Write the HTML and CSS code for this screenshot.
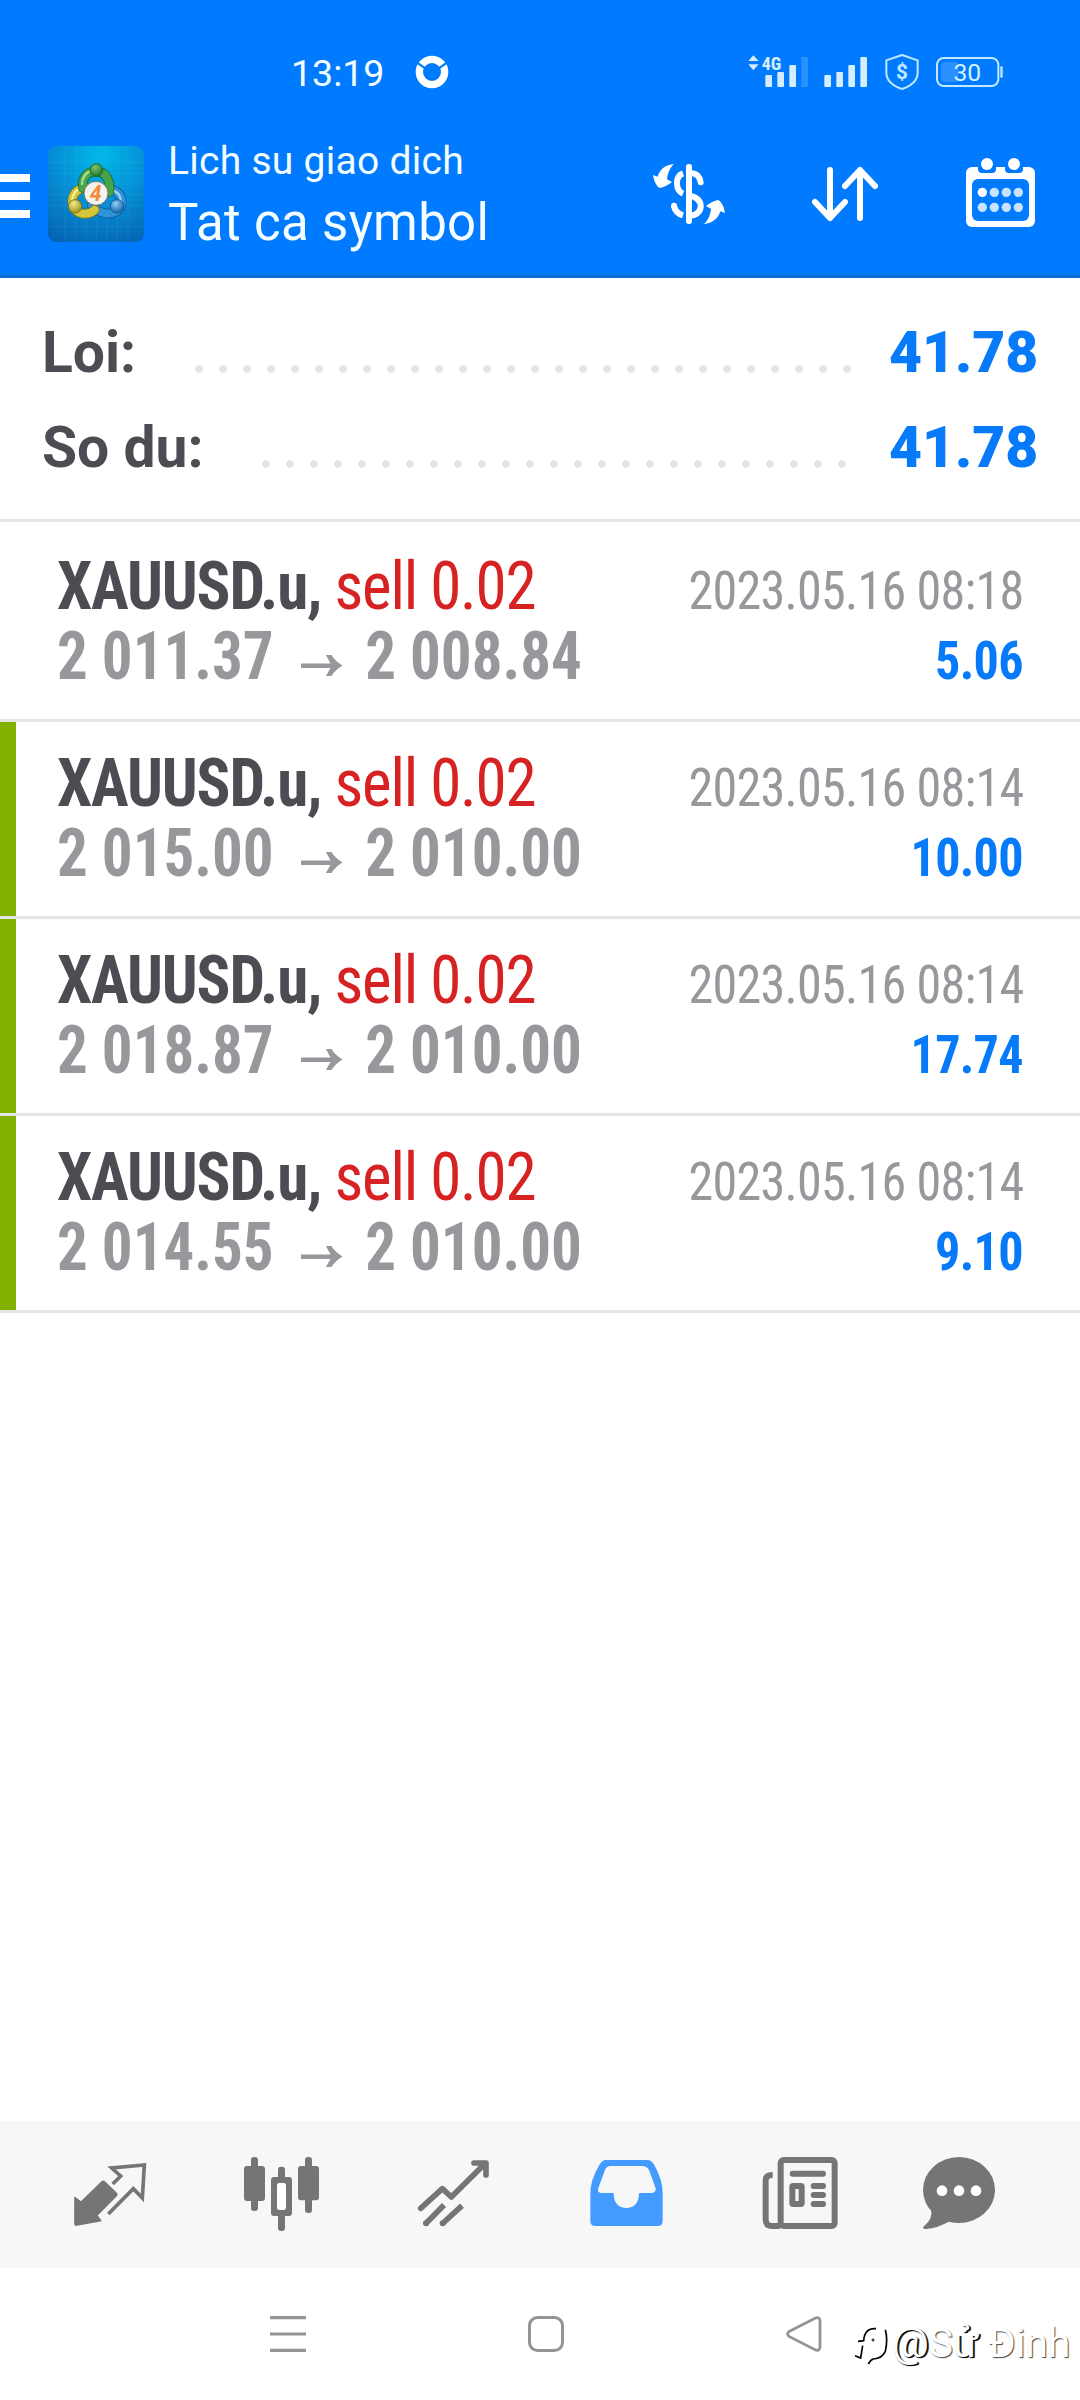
FILE: index.html
```html
<!DOCTYPE html>
<html lang="vi">
<head>
<meta charset="utf-8">
<title>Lich su giao dich</title>
<link rel="stylesheet" href="styles.css">
</head>
<body>
<div class="screen">
  <header class="header">
    <div class="status">
      <span class="clock">13:19</span>
      <svg class="ring" width="34" height="40" viewBox="435 30 102 120"><circle cx="486" cy="96" r="38" fill="none" stroke="#fff" stroke-width="22"/><path d="M436 64L470 88M536 64L502 88" stroke="#007aff" stroke-width="7"/></svg>
      <div class="status-right">
        <svg width="61" height="40" viewBox="57 30 183 120" fill="#d4eeff"><path d="M58 63L73 46L89 63ZM58 73H89L73 91Z"/><text x="98" y="90" class="net">4G</text><rect x="109" y="105" width="20" height="36" rx="3"/><rect x="145" y="96" width="20" height="45" rx="3"/><rect x="181" y="75" width="20" height="66" rx="3"/><rect x="217" y="51" width="20" height="90" rx="3" opacity=".2"/></svg>
        <svg width="44" height="40" viewBox="279 30 132 120" fill="#d4eeff"><rect x="280" y="105" width="20" height="36" rx="3"/><rect x="316" y="96" width="20" height="45" rx="3"/><rect x="352" y="75" width="20" height="66" rx="3"/><rect x="388" y="51" width="20" height="90" rx="3"/></svg>
        <svg width="36" height="40" viewBox="459 30 108 120"><path d="M513 45L560 61V98Q560 130 513 147Q466 130 466 98V61Z" fill="none" stroke="#bfe9ff" stroke-width="6" stroke-linejoin="round"/><text x="513" y="118" class="coin">$</text></svg>
        <svg width="69" height="40" viewBox="615 30 207 120"><rect x="633" y="66" width="52" height="60" rx="10" fill="#fff" opacity=".17"/><rect x="621" y="54" width="184" height="84" rx="20" fill="none" stroke="#bfe9ff" stroke-width="6"/><rect x="811" y="79" width="7" height="34" rx="3" fill="#bfe9ff"/><text x="712" y="123" class="charge">30</text></svg>
      </div>
    </div>
    <div class="appbar">
      <div class="menu"><i></i><i></i><i></i></div>
      <svg class="logo" width="96" height="96" viewBox="144 48 288 288">
        <defs>
          <radialGradient id="sky" cx=".55" cy=".1" r="1"><stop offset="0" stop-color="#00b8ea"/><stop offset=".45" stop-color="#0592d6"/><stop offset="1" stop-color="#0563b3"/></radialGradient>
          <radialGradient id="gr" cx=".4" cy=".3" r=".7"><stop offset="0" stop-color="#7cc96e"/><stop offset="1" stop-color="#22762c"/></radialGradient>
          <radialGradient id="ye" cx=".4" cy=".3" r=".7"><stop offset="0" stop-color="#f2ea90"/><stop offset="1" stop-color="#a09418"/></radialGradient>
          <radialGradient id="bl" cx=".4" cy=".3" r=".7"><stop offset="0" stop-color="#8fd0f4"/><stop offset="1" stop-color="#1767ae"/></radialGradient>
        </defs>
        <rect x="144" y="48" width="288" height="288" rx="26" fill="url(#sky)"/>
        <path d="M195 48V336M228 48V336M259 48V336M290 48V336M321 48V336M352 48V336M384 48V336M144 98H432M144 130H432M144 162H432M144 194H432M144 226H432M144 258H432M144 290H432" stroke="#6cd0ff" stroke-width="2" opacity=".17"/>
        <g fill="none" stroke-linecap="round">
          <path d="M324 178C366 182 373 215 357 238C333 260 297 252 276 226" stroke="#135a9b" stroke-width="29"/>
          <path d="M324 178C366 182 373 215 357 238C333 260 297 252 276 226" stroke="#2f93d8" stroke-width="24"/>
          <path d="M333 180C362 186 369 212 354 232" stroke="#9ad4f4" stroke-width="7"/>
          <path d="M256 173C219 177 209 212 222 236C242 257 268 255 284 240" stroke="#7d7413" stroke-width="29"/>
          <path d="M256 173C219 177 209 212 222 236C242 257 268 255 284 240" stroke="#d3c638" stroke-width="24"/>
          <path d="M248 172C220 180 213 205 218 226" stroke="#f4ee9c" stroke-width="7"/>
          <path d="M249 174C245 134 269 124 289 124C315 124 333 150 328 186" stroke="#1d6828" stroke-width="29"/>
          <path d="M249 174C245 134 269 124 289 124C315 124 333 150 328 186" stroke="#46a548" stroke-width="24"/>
          <path d="M246 162C248 134 262 126 275 122" stroke="#a6dd96" stroke-width="7"/>
        </g>
        <circle cx="289" cy="120" r="19" fill="url(#gr)" stroke="#1d6828" stroke-width="3"/>
        <circle cx="225" cy="229" r="20" fill="url(#ye)" stroke="#7d7413" stroke-width="3"/>
        <circle cx="351" cy="229" r="20" fill="url(#bl)" stroke="#135a9b" stroke-width="3"/>
        <circle cx="288" cy="190" r="36" fill="#f2f2f0" stroke="#776f50" stroke-width="3"/>
        <text x="287" y="212" class="four">4</text>
      </svg>
      <div class="titles">
        <div class="subtitle">Lich su giao dich</div>
        <div class="title">Tat ca symbol</div>
      </div>
      <div class="actions">
        <svg width="76" height="90" viewBox="36 30 228 270" fill="#fff">
          <rect x="141" y="72" width="18" height="180" rx="8"/>
          <g fill="none" stroke="#fff" stroke-width="18"><path d="M132 100C108 108 108 150 132 161"/><path d="M155 99C172 100 183 110 185 127" stroke-linecap="round"/><path d="M152 168C196 172 196 224 154 227"/><path d="M132 226C118 222 108 212 105 198"/></g><circle cx="105" cy="197" r="9"/>
          <path id="turn" d="M105 72C80 74 62 88 56 110L42 105L46 122Q54 140 62 144Q80 141 99 126L84 118C86 100 92 84 105 72Z"/>
          <use href="#turn" transform="rotate(180 150 162)"/>
        </svg>
        <svg width="72" height="90" viewBox="510 30 216 270" fill="none" stroke="#fff" stroke-width="18" stroke-linecap="round" stroke-linejoin="round"><path d="M573 90V234M528 186L573 234L618 186M663 234V90M618 138L663 90L708 138"/></svg>
        <svg width="75" height="90" viewBox="969 30 225 270" fill="#fff">
          <rect x="978" y="81" width="207" height="180" rx="18"/>
          <g fill="#007aff"><rect x="996" y="117" width="171" height="126" rx="18"/><rect x="1014" y="72" width="54" height="27" rx="12"/><rect x="1095" y="72" width="54" height="27" rx="12"/></g>
          <circle cx="1041" cy="72" r="18"/><circle cx="1122" cy="72" r="18"/><circle cx="1027" cy="157" r="14"/>
          <g fill="#c8e2ff"><circle cx="1063" cy="157" r="14"/><circle cx="1099" cy="157" r="14"/><circle cx="1135" cy="157" r="14"/><circle cx="1027" cy="202" r="14"/><circle cx="1063" cy="202" r="14"/><circle cx="1099" cy="202" r="14"/><circle cx="1135" cy="202" r="14"/></g>
        </svg>
      </div>
    </div>
  </header>

  <section class="summary">
    <div class="sum"><span>Loi:</span><i class="dots wide"></i><b>41.78</b></div>
    <div class="sum"><span>So du:</span><i class="dots narrow"></i><b>41.78</b></div>
  </section>

  <main class="deals">
    <article class="deal first">
      <div class="line"><div class="left head"><b class="symbol">XAUUSD.u,</b> <span class="sell">sell 0.02</span></div><time>2023.05.16 08:18</time></div>
      <div class="line"><div class="left price">2 011.37<svg class="arrow" width="45" height="21" viewBox="0 0 45 21"><path d="M0 8.500H32L27 0H33Q37 6 45 10.500Q37 15 33 21H27L32 13H0Z"/></svg>2 008.84</div><b class="profit">5.06</b></div>
    </article>
    <article class="deal tp">
      <div class="line"><div class="left head"><b class="symbol">XAUUSD.u,</b> <span class="sell">sell 0.02</span></div><time>2023.05.16 08:14</time></div>
      <div class="line"><div class="left price">2 015.00<svg class="arrow" width="45" height="21" viewBox="0 0 45 21"><path d="M0 8.500H32L27 0H33Q37 6 45 10.500Q37 15 33 21H27L32 13H0Z"/></svg>2 010.00</div><b class="profit">10.00</b></div>
    </article>
    <article class="deal tp">
      <div class="line"><div class="left head"><b class="symbol">XAUUSD.u,</b> <span class="sell">sell 0.02</span></div><time>2023.05.16 08:14</time></div>
      <div class="line"><div class="left price">2 018.87<svg class="arrow" width="45" height="21" viewBox="0 0 45 21"><path d="M0 8.500H32L27 0H33Q37 6 45 10.500Q37 15 33 21H27L32 13H0Z"/></svg>2 010.00</div><b class="profit">17.74</b></div>
    </article>
    <article class="deal tp">
      <div class="line"><div class="left head"><b class="symbol">XAUUSD.u,</b> <span class="sell">sell 0.02</span></div><time>2023.05.16 08:14</time></div>
      <div class="line"><div class="left price">2 014.55<svg class="arrow" width="45" height="21" viewBox="0 0 45 21"><path d="M0 8.500H32L27 0H33Q37 6 45 10.500Q37 15 33 21H27L32 13H0Z"/></svg>2 010.00</div><b class="profit">9.10</b></div>
    </article>
  </main>

  <nav class="tabs">
    <svg width="74" height="80" viewBox="69 129 222 240"><path d="M75 263L93 277L157 215Q161 213 165 217L198 249Q202 254 198 258L140 316L152 332L80 345Q75 346 75 341Z" fill="#757575" stroke="#757575" stroke-width="5" stroke-linejoin="round"/><path d="M188 222L212 198L185 174L283 165L277 264L250 236L175 312" fill="none" stroke="#757575" stroke-width="11"/></svg>
    <svg width="77" height="80" viewBox="579 129 231 240" fill="#757575"><rect x="582" y="168" width="63" height="105" rx="9"/><rect x="603" y="141" width="21" height="162" rx="9"/><rect x="684" y="170" width="21" height="193" rx="9"/><rect x="663" y="201" width="63" height="117" rx="9"/><rect x="681" y="219" width="27" height="81" rx="7" fill="#fff"/><rect x="744" y="168" width="63" height="103" rx="9"/><rect x="765" y="141" width="21" height="168" rx="9"/></svg>
    <svg width="73" height="80" viewBox="1101 129 219 240" fill="none" stroke="#757575" stroke-width="17" stroke-linecap="round" stroke-linejoin="round"><path d="M1112 295L1177 236L1204 261L1306 160M1272 159H1308V195"/><g stroke-linecap="butt"><path d="M1126 342L1182 285M1176 342L1236 287"/></g><g fill="#757575" stroke="none"><circle cx="1128" cy="340" r="9"/><circle cx="1178" cy="340" r="9"/></g></svg>
    <svg width="73" height="80" viewBox="90 129 219 240"><path d="M135 150H265Q275 151 283 165Q308 210 308 250V333Q308 348 293 348H106Q91 348 91 333V250Q91 210 118 165Q126 151 135 150Z" fill="#449bff"/><path d="M150 168H248Q262 170 267 180L287 235Q288 248 276 249H237C237 280 222 294 199 294S161 280 161 249H124Q112 248 114 237L134 182Q139 169 150 168Z" fill="#f7f7f7"/></svg>
    <svg width="76" height="80" viewBox="606 129 228 240" fill="none" stroke="#757575" stroke-width="18" stroke-linecap="round"><rect x="662" y="150" width="162" height="198" rx="9"/><path d="M638 195Q617 195 617 211V328Q617 348 635 348H660" stroke-linecap="butt"/><path d="M698 191H789M761 228H789M761 255H789M761 282H789"/><rect x="697" y="228" width="28" height="54" rx="2"/></svg>
    <svg width="74" height="80" viewBox="1083 129 222 240" fill="#757575"><ellipse cx="1194" cy="240" rx="108" ry="99"/><path d="M1108 292Q1120 325 1087 350Q1085 357 1095 357Q1130 355 1166 334Z"/><g fill="#fff"><circle cx="1143" cy="242" r="16"/><circle cx="1194" cy="242" r="16"/><circle cx="1245" cy="242" r="16"/></g></svg>
  </nav>

  <footer class="system">
    <svg width="36" height="36" viewBox="0 0 36 36"><path d="M0 1.6H36M0 18H36M0 34.4H36" stroke="#949494" stroke-width="3.2"/></svg>
    <svg width="36" height="36" viewBox="0 0 36 36"><rect x="1.5" y="1.5" width="33" height="33" rx="8" fill="none" stroke="#949494" stroke-width="3"/></svg>
    <svg width="36" height="36" viewBox="0 0 36 36"><path d="M3 15.6L29.5 2Q34 .8 34 5.2V30.8Q34 35.200 29.500 34L3 20.400Q.2 18 3 15.600Z" fill="none" stroke="#949494" stroke-width="2.8"/></svg>
    <div class="mark">
      <svg width="36" height="42" viewBox="36 220 108 126" fill="none" stroke="#000" stroke-width="5"><path d="M108 237Q74 234 71 273L54 275M68 288L62 325L45 318"/><path d="M136 240Q144 270 136 305Q126 326 100 328Q92 330 85 343"/><circle cx="99" cy="271" r="3" stroke-width="3"/></svg>
      <div class="author"><span class="at">@</span><span class="soft">S</span><span class="at">ử</span> <span class="soft">Đinh</span></div>
    </div>
  </footer>
</div>
</body>
</html>
```
FILE: styles.css
```css
* { box-sizing: border-box; }
body { margin: 0; background: #fff; font-family: Roboto, "Liberation Sans", sans-serif; }
svg { display: block; flex: none; }
.screen { width: 1080px; height: 2400px; display: flex; flex-direction: column; background: #fff; overflow: hidden; }

.header { height: 278px; background: #007aff; border-bottom: 3px solid #0b6cd6; color: #f4fdff; }
.status { height: 130px; padding: 50px 76px 0 291px; display: flex; align-items: flex-start; }
.clock { width: 124px; font-size: 37.5px; font-weight: 450; line-height: 47px; white-space: nowrap; }
.status-right { display: flex; gap: 15.500px; margin-left: auto; }
.net { font: 700 54px Roboto, sans-serif; font-stretch: 75%; }
.coin { font: 700 62px Roboto, sans-serif; text-anchor: middle; fill: #bfe9ff; }
.charge { font: 400 74px Roboto, sans-serif; text-anchor: middle; fill: #d4f2ff; }

.appbar { display: flex; align-items: flex-start; padding-right: 42px; }
.menu { width: 30px; margin-top: 44px; display: grid; gap: 10px; }
.menu i { height: 8px; background: #fff; }
.logo { margin: 16px 24px 0 18px; }
.four { font: italic 700 64px Roboto, sans-serif; text-anchor: middle; fill: #f28a3c; }
.titles { padding-top: 1px; white-space: nowrap; line-height: 61px; }
.subtitle { font-size: 39px; letter-spacing: .28px; }
.title { font-size: 51px; letter-spacing: .32px; }
.actions { display: flex; gap: 82px; margin: 20px 0 0 auto; }

.summary { height: 244px; padding: 27px 42px 0; border-bottom: 3px solid #e4e4e4; }
.sum { height: 95px; display: flex; align-items: flex-start; font-size: 57px; font-weight: 700; line-height: 95px; color: #4d4c52; }
.sum b { width: 149px; text-align: right; color: #067af8; }
.dots { height: 8px; margin: 60px 36px 0 auto; background: radial-gradient(circle at 4px 4px, #e4e4e4 3.6px, transparent 4.2px) 0 0 / 24px 8px repeat-x; }
.wide { width: 656px; margin-right: 38px; }
.narrow { width: 584px; margin-right: 43px; }

.deal { height: 197px; padding: 27px 57px 0; border-bottom: 3px solid #e4e4e4; }
.first { height: 200px; padding-top: 30px; }
.tp { background: linear-gradient(#80b000, #80b000) 0 0 / 16px 100% no-repeat padding-box; }
.line { height: 70px; display: flex; justify-content: space-between; align-items: baseline; line-height: 70px; font-size: 66px; font-stretch: 75%; white-space: nowrap; }
.left { transform: scaleX(.924); transform-origin: 0 0; }
.left.head { transform: scaleX(.955); letter-spacing: -1.25px; }
.symbol { color: #4d4c52; }
.sell { color: #d62222; }
.price { font-weight: 700; color: #97989c; }
.arrow { display: inline-block; margin: 0 25px 0 29px; vertical-align: 3px; fill: #97989c; }
.line time, .profit { font-size: 53px; transform: scaleX(.945); transform-origin: 100% 0; color: #97989c; letter-spacing: -.75px; }
.line .profit { color: #067af8; }

.tabs { height: 147px; margin-top: auto; padding: 32px 50px 0 24px; background: #f7f7f7; display: grid; grid-template-columns: 171px 172px 173px 173px 174px 143px; justify-items: center; align-items: start; }
.system { position: relative; height: 132px; padding-left: 159px; display: grid; grid-template-columns: repeat(3, 258px); justify-items: center; align-items: center; }
.mark { position: absolute; left: 852px; top: 55px; display: flex; align-items: flex-start; }
.author { margin: -4px 0 0 4px; font-size: 41px; line-height: 48px; color: #fff; white-space: nowrap; letter-spacing: -.15px; }
.at { text-shadow: 1px 1px 1px #000, 2px 1px 0 #333; }
.soft { text-shadow: 1px 1px 1px #444; }
```
